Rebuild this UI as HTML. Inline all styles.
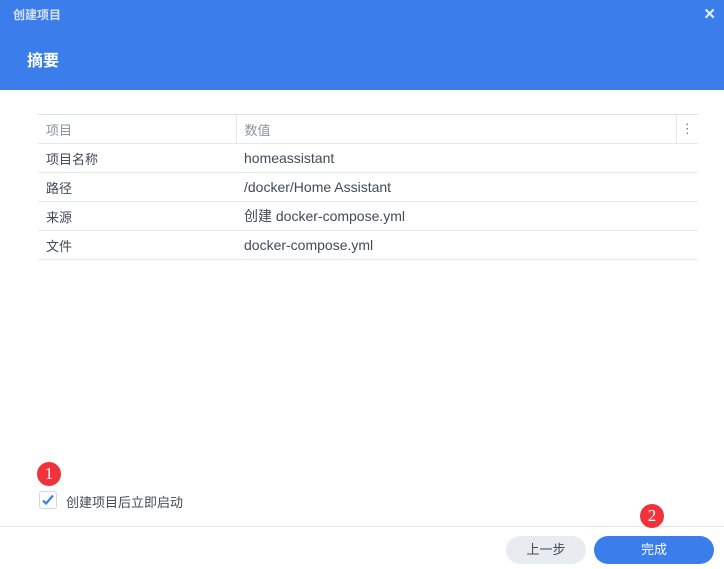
<!DOCTYPE html>
<html><head><meta charset="utf-8"><style>
*{margin:0;padding:0;box-sizing:border-box}
body{width:724px;height:569px;background:#fff;font-family:"Liberation Sans","Noto Sans CJK SC",sans-serif;position:relative;overflow:hidden;font-size:13px;color:#414b55}
.hdr{position:absolute;left:0;top:0;width:724px;height:90px;background:#3b7eeb}
.t1{position:absolute;left:13px;top:6px;font-size:12px;color:#d5e3fb;font-weight:bold}
.x{position:absolute;right:8px;top:5px;color:#e6eefc;font-size:15px;font-weight:bold}
.t2{position:absolute;left:27px;top:47px;font-size:16px;color:#fff;font-weight:bold}
table{position:absolute;left:38px;top:114px;width:660px;border-collapse:collapse}
td{height:29px;border-bottom:1px solid #e5e9ed;padding-left:8px;font-size:13px}
td.v{font-size:14px}
tr.h td{border-top:1px solid #d8e0e8;color:#8a949e;height:29px}
tr.h td+td{border-left:1px solid #e5e9ed}
.b{position:absolute;border-radius:50%;background:#f0333a;color:#fff;width:24px;height:24px;text-align:center;font-family:"Liberation Serif",serif;font-size:17px;line-height:24px}
.cb{position:absolute;left:39px;top:491px;width:18px;height:18px;border:1px solid #d0d8e0;border-radius:3px}
.line{position:absolute;left:0;top:526px;width:724px;height:1px;background:#e3e7ec}
.btn{position:absolute;top:536px;height:28px;border-radius:14px;text-align:center;line-height:28px;font-size:13px}
</style></head><body>
<div class="hdr"><div class="t1">创建项目</div><div class="x">✕</div><div class="t2">摘要</div></div>
<table>
<tr class="h"><td style="width:198px">项目</td><td>数值</td><td style="width:22px;padding:0;text-align:center;color:#777">⋮</td></tr>
<tr><td>项目名称</td><td class="v" colspan="2">homeassistant</td></tr>
<tr><td>路径</td><td class="v" colspan="2">/docker/Home Assistant</td></tr>
<tr><td>来源</td><td class="v" colspan="2">创建 docker-compose.yml</td></tr>
<tr><td>文件</td><td class="v" colspan="2">docker-compose.yml</td></tr>
</table>
<div class="b" style="left:37px;top:462px">1</div>
<div class="cb"><svg width="16" height="16" viewBox="0 0 16 16"><path d="M3 8.5l3 3 7-8" stroke="#3b7eeb" stroke-width="2.2" fill="none"/></svg></div>
<div style="position:absolute;left:66px;top:492px;font-size:13px;color:#414b55">创建项目后立即启动</div>
<div class="line"></div>
<div class="b" style="left:640px;top:504px">2</div>
<div class="btn" style="left:506px;width:80px;background:#e8ecf0;color:#414b55">上一步</div>
<div class="btn" style="left:594px;width:120px;background:#3b7eeb;color:#fff">完成</div>
</body></html>
